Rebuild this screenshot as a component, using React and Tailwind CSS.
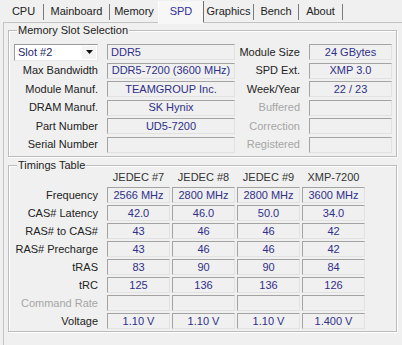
import React from "react";

const NAVY = "text-[#2f2f8c]";

function Field({ children, left, w }) {
  return (
    <div
      className={
        "h-[16px] shrink-0 border border-t-[#a3a3a3] border-l-[#a3a3a3] border-b-[#e2e2e2] border-r-[#e2e2e2] bg-[#f0f0f0] flex items-center leading-none text-[#2f2f8c] " +
        (left ? "justify-start pl-[3px] " : "justify-center ") +
        w
      }
    >
      {children}
    </div>
  );
}

function Label({ children, gray, w }) {
  return (
    <div
      className={
        "shrink-0 text-right leading-none " +
        (gray ? "text-[#a6a6a6] " : "text-[#222222] ") +
        w
      }
    >
      {children}
    </div>
  );
}

function Group({ title, children, className }) {
  return (
    <div
      className={
        "relative border border-[#bcbcbc] shadow-[1px_1px_0_#ffffff,inset_1px_1px_0_#ffffff] " +
        className
      }
    >
      <div className="absolute left-[8px] top-[-8px] h-[14px] px-[1px] bg-[#f0f0f0] leading-[14px] text-[#222222]">
        {title}
      </div>
      {children}
    </div>
  );
}

const tabs = [
  { name: "CPU", w: "w-[39px]" },
  { name: "Mainboard", w: "w-[65px]" },
  { name: "Memory", w: "w-[48px]", noSep: true },
  { name: "SPD", w: "w-[45px]", sel: true },
  { name: "Graphics", w: "w-[49px]" },
  { name: "Bench", w: "w-[44px]" },
  { name: "About", w: "w-[43px]" },
];

const topRows = [
  { l: null, v: "DDR5", left: true, rl: "Module Size", rv: "24 GBytes" },
  { l: "Max Bandwidth", v: "DDR5-7200 (3600 MHz)", rl: "SPD Ext.", rv: "XMP 3.0" },
  { l: "Module Manuf.", v: "TEAMGROUP Inc.", rl: "Week/Year", rv: "22 / 23" },
  { l: "DRAM Manuf.", v: "SK Hynix", rl: "Buffered", rv: "", rg: true },
  { l: "Part Number", v: "UD5-7200", rl: "Correction", rv: "", rg: true },
  { l: "Serial Number", v: "", rl: "Registered", rv: "", rg: true },
];

const timingRows = [
  { l: "Frequency", v: ["2566 MHz", "2800 MHz", "2800 MHz", "3600 MHz"] },
  { l: "CAS# Latency", v: ["42.0", "46.0", "50.0", "34.0"] },
  { l: "RAS# to CAS#", v: ["43", "46", "46", "42"] },
  { l: "RAS# Precharge", v: ["43", "46", "46", "42"] },
  { l: "tRAS", v: ["83", "90", "90", "84"] },
  { l: "tRC", v: ["125", "136", "136", "126"] },
  { l: "Command Rate", v: ["", "", "", ""], g: true },
  { l: "Voltage", v: ["1.10 V", "1.10 V", "1.10 V", "1.400 V"] },
];

export default function App() {
  return (
    <div className="w-[402px] h-[345px] overflow-hidden bg-[#f0f0f0] font-['Liberation_Sans',Arial,sans-serif] text-[11px] select-none">
      {/* Tab strip */}
      <div className="relative z-10 flex h-[22px] pl-[4px]">
        {tabs.map((t) => (
          <React.Fragment key={t.name}>
            {t.sel ? (
              <div
                className={
                  "h-[23px] mt-[1px] flex items-center justify-center bg-[#f7f7f7] border-l border-l-[#ffffff] text-[#2f2f9a] " +
                  t.w
                }
              >
                <span className="mt-[-2px]">{t.name}</span>
              </div>
            ) : (
              <div
                className={
                  "h-[22px] flex items-center justify-center text-[#222222] " + t.w
                }
              >
                <span className="mt-[1px]">{t.name}</span>
              </div>
            )}
            {t.sel ? (
              <div className="w-px h-[21px] mt-[1px] bg-[#6e6e6e]" />
            ) : t.noSep ? null : (
              <div className="w-px h-[16px] mt-[4px] bg-[#7a7a7a]" />
            )}
          </React.Fragment>
        ))}
      </div>

      {/* Panel */}
      <div className="ml-[3px] w-[400px] h-[330px] border-t border-l border-[#c4c4c4] pt-[7px] pl-[4px]">
        <Group title="Memory Slot Selection" className="w-[389px] h-[127px] pt-[13px]">
          <div className="flex flex-col gap-[2.6px]">
            {topRows.map((r, i) => (
              <div key={i} className="flex items-center h-[16px]">
                {r.l === null ? (
                  <div className="w-[89px] shrink-0 flex">
                    <div className="ml-[5px] w-[84px] h-[17px] border border-t-[#9a9a9a] border-l-[#9a9a9a] border-b-[#e8e8e8] border-r-[#e8e8e8] bg-[#ffffff] flex items-center">
                      <span className="pl-[3px] flex-1 text-[#1f1f70] leading-none">Slot #2</span>
                      <div className="w-[14px] h-[13px] mr-[1px] flex items-center justify-center bg-[#f4f4f4]">
                        <svg width="7" height="4" viewBox="0 0 7 4">
                          <path d="M0 0H7L3.5 4Z" fill="#111111" />
                        </svg>
                      </div>
                    </div>
                  </div>
                ) : (
                  <Label w="w-[89px]">{r.l}</Label>
                )}
                <div className="ml-[9px]">
                  <Field left={r.left} w="w-[128px]">{r.v}</Field>
                </div>
                <Label gray={r.rg} w="w-[65px]">{r.rl}</Label>
                <div className="ml-[9px]">
                  <Field w="w-[83px]">{r.rv}</Field>
                </div>
              </div>
            ))}
          </div>
        </Group>

        <Group title="Timings Table" className="mt-[8px] w-[389px] h-[167px]">
          <div className="flex mt-[4px] h-[14px] items-center">
            <div className="w-[98px] shrink-0" />
            <div className="flex gap-[2px] text-[#333333]">
              {["JEDEC #7", "JEDEC #8", "JEDEC #9", "XMP-7200"].map((h) => (
                <div key={h} className="w-[63px] text-center leading-none">
                  {h}
                </div>
              ))}
            </div>
          </div>
          <div className="mt-[3px] flex flex-col gap-[2px]">
            {timingRows.map((r) => (
              <div key={r.l} className="flex items-center h-[16px]">
                <Label gray={r.g} w="w-[89px]">{r.l}</Label>
                <div className="ml-[9px] flex gap-[2px]">
                  {r.v.map((v, i) => (
                    <Field key={i} w="w-[63px]">{v}</Field>
                  ))}
                </div>
              </div>
            ))}
          </div>
        </Group>
      </div>
    </div>
  );
}
